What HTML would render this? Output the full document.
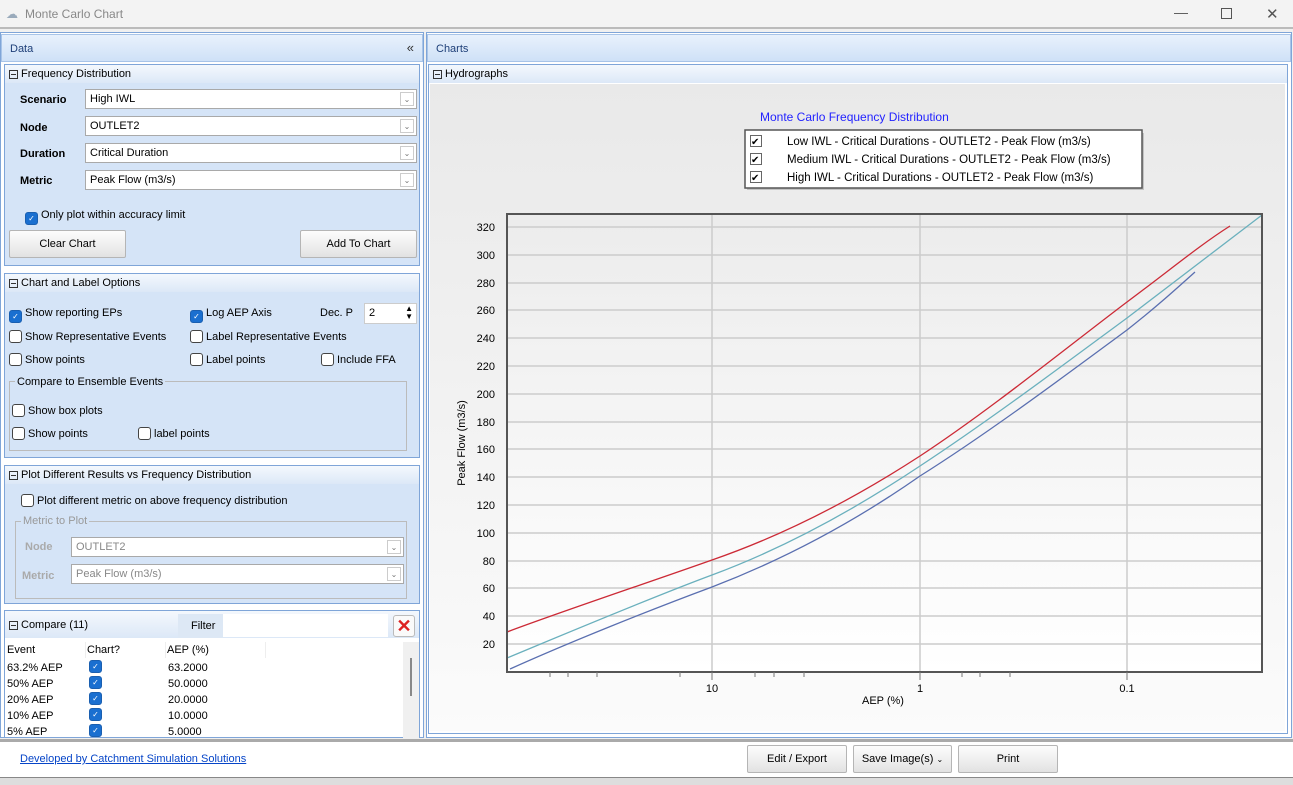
<!DOCTYPE html>
<html><head><meta charset="utf-8"><style>
*{box-sizing:border-box;margin:0;padding:0}
body{width:1293px;height:785px;overflow:hidden;background:#f0f0f0;font-family:"Liberation Sans",sans-serif;font-size:11px;color:#000;position:relative}
.a{position:absolute}
.hdr{background:linear-gradient(#e8f1fc,#cfe1f7);border:1px solid #a8c4e8;color:#1e3f78;font-size:11px;padding:8px 8px}
.grp{border:1px solid #7fa5d8;background:#d5e4f7}
.gh{position:absolute;left:0;right:0;top:0;height:18px;background:linear-gradient(#f4f8fd,#dce8f7);padding:3px 4px;font-size:11px;display:flex;align-items:center}
.box{display:inline-block;width:9px;height:9px;border:1px solid #333;margin-right:3px;position:relative;flex:none}
.box:after{content:"";position:absolute;left:1px;right:1px;top:3px;height:1px;background:#333}
.lbl{font-weight:bold;font-size:11px}
.cb{background:#fff;border:1px solid #a9a9a9;height:20px;padding:3px 4px;font-size:11px}
.cb i{position:absolute;right:2px;top:2px;width:14px;height:14px;border:1px solid #ccc;font-style:normal;color:#777;font-size:8px;text-align:center;line-height:13px}
.chk{display:inline-block;width:13px;height:13px;border:1px solid #444;border-radius:3px;background:#fff;vertical-align:-3px;margin-right:3px}
.chk.on{background:#1a6fd0;border-color:#1a5fb0;color:#fff;font-size:8px;text-align:center;line-height:12px}
.btn{background:linear-gradient(#fdfdfd,#e2e2e2);border:1px solid #b5b5b5;border-radius:2px;text-align:center;font-size:11px}
</style></head><body>
<div class="a" style="left:0;top:0;width:1293px;height:29px;background:#f3f3f3;border-bottom:2px solid #bbb"></div>
<div class="a" style="left:6px;top:7px;color:#9ab;font-size:12px">☁</div>
<div class="a" style="left:25px;top:7px;color:#888;font-size:12px">Monte Carlo Chart</div>
<div class="a" style="left:1174px;top:4px;color:#555;font-size:14px">—</div>
<div class="a" style="left:1221px;top:8px;width:11px;height:11px;border:1px solid #555"></div>
<div class="a" style="left:1266px;top:5px;color:#555;font-size:15px">✕</div>

<div class="a" style="left:0;top:32px;width:424px;height:706px;background:#fff;border:1px solid #7fa5d8"></div>
<div class="a hdr" style="left:1px;top:34px;width:422px;height:28px">Data<span style="position:absolute;right:8px;top:5px;font-size:13px;color:#333">«</span></div>

<div class="a grp" style="left:4px;top:64px;width:416px;height:202px">
 <div class="gh"><span class="box"></span>Frequency Distribution</div>
 <div class="a lbl" style="left:15px;top:29px">Scenario</div>
 <div class="a lbl" style="left:15px;top:57px">Node</div>
 <div class="a lbl" style="left:15px;top:83px">Duration</div>
 <div class="a lbl" style="left:15px;top:110px">Metric</div>
 <div class="a cb" style="left:80px;top:24px;width:332px">High IWL<i>⌄</i></div>
 <div class="a cb" style="left:80px;top:51px;width:332px">OUTLET2<i>⌄</i></div>
 <div class="a cb" style="left:80px;top:78px;width:332px">Critical Duration<i>⌄</i></div>
 <div class="a cb" style="left:80px;top:105px;width:332px">Peak Flow (m3/s)<i>⌄</i></div>
 <div class="a" style="left:20px;top:144px"><span class="chk on">✓</span>Only plot within accuracy limit</div>
 <div class="a btn" style="left:4px;top:165px;width:117px;height:28px;line-height:26px">Clear Chart</div>
 <div class="a btn" style="left:295px;top:165px;width:117px;height:28px;line-height:26px">Add To Chart</div>
</div>

<div class="a grp" style="left:4px;top:273px;width:416px;height:185px">
 <div class="gh"><span class="box"></span>Chart and Label Options</div>
 <div class="a" style="left:4px;top:33px"><span class="chk on">✓</span>Show reporting EPs</div>
 <div class="a" style="left:185px;top:33px"><span class="chk on">✓</span>Log AEP Axis</div>
 <div class="a" style="left:315px;top:33px">Dec. P</div>
 <div class="a" style="left:359px;top:29px;width:53px;height:21px;background:#fff;border:1px solid #ccc;padding:3px 4px">2<span style="position:absolute;right:3px;top:1px;font-size:8px;line-height:8px">▲<br>▼</span></div>
 <div class="a" style="left:4px;top:56px"><span class="chk"></span>Show Representative Events</div>
 <div class="a" style="left:185px;top:56px"><span class="chk"></span>Label Representative Events</div>
 <div class="a" style="left:4px;top:79px"><span class="chk"></span>Show points</div>
 <div class="a" style="left:185px;top:79px"><span class="chk"></span>Label points</div>
 <div class="a" style="left:316px;top:79px"><span class="chk"></span>Include FFA</div>
 <div class="a" style="left:4px;top:107px;width:398px;height:70px;border:1px solid #bbb"></div>
 <div class="a" style="left:10px;top:102px;background:#d5e4f7;padding:0 2px">Compare to Ensemble Events</div>
 <div class="a" style="left:7px;top:130px"><span class="chk"></span>Show box plots</div>
 <div class="a" style="left:7px;top:153px"><span class="chk"></span>Show points</div>
 <div class="a" style="left:133px;top:153px"><span class="chk"></span>label points</div>
</div>

<div class="a grp" style="left:4px;top:465px;width:416px;height:139px">
 <div class="gh"><span class="box"></span>Plot Different Results vs Frequency Distribution</div>
 <div class="a" style="left:16px;top:28px"><span class="chk"></span>Plot different metric on above frequency distribution</div>
 <div class="a" style="left:10px;top:55px;width:392px;height:78px;border:1px solid #bbb"></div>
 <div class="a" style="left:16px;top:49px;background:#d5e4f7;padding:0 2px;color:#999">Metric to Plot</div>
 <div class="a lbl" style="left:20px;top:75px;color:#aaa">Node</div>
 <div class="a lbl" style="left:17px;top:104px;color:#aaa">Metric</div>
 <div class="a cb" style="left:66px;top:71px;width:333px;color:#888">OUTLET2<i>⌄</i></div>
 <div class="a cb" style="left:66px;top:98px;width:333px;color:#888">Peak Flow (m3/s)<i>⌄</i></div>
</div>

<div class="a" style="left:4px;top:610px;width:416px;height:128px;border:1px solid #7fa5d8;background:#fff"></div>
<div class="a" style="left:5px;top:611px;width:414px;height:27px;background:linear-gradient(#f4f8fd,#dce8f7)"></div>
<div class="a" style="left:9px;top:619px;display:flex;align-items:center"><span class="box"></span>Compare (11)</div>
<div class="a" style="left:178px;top:614px;width:46px;height:24px;background:#dde8f5;padding:6px 0 0 13px">Filter</div>
<div class="a" style="left:223px;top:614px;width:165px;height:23px;background:#fff"></div>
<div class="a" style="left:393px;top:615px;width:22px;height:22px;border:1px solid #bbb;border-radius:3px;background:#fafafa;color:#d22;font-size:18px;font-weight:bold;text-align:center;line-height:20px">✕</div>
<div class="a" style="left:7px;top:644px">Event</div>
<div class="a" style="left:87px;top:644px">Chart?</div>
<div class="a" style="left:167px;top:644px">AEP (%)</div>
<div class="a" style="left:85px;top:642px;width:1px;height:16px;background:#eee"></div>
<div class="a" style="left:165px;top:642px;width:1px;height:16px;background:#eee"></div>
<div class="a" style="left:265px;top:642px;width:1px;height:16px;background:#eee"></div>
<div class="a" style="left:403px;top:642px;width:16px;height:96px;background:#f0f0f0"></div>
<div class="a" style="left:410px;top:658px;width:2px;height:38px;background:#888"></div>
<div class="a" style="left:7px;top:660px;line-height:16px">63.2% AEP<br>50% AEP<br>20% AEP<br>10% AEP<br>5% AEP</div>
<div class="a chk on" style="left:89px;top:660px">✓</div>
<div class="a chk on" style="left:89px;top:676px">✓</div>
<div class="a chk on" style="left:89px;top:692px">✓</div>
<div class="a chk on" style="left:89px;top:708px">✓</div>
<div class="a chk on" style="left:89px;top:724px">✓</div>
<div class="a" style="left:168px;top:660px;line-height:16px">63.2000<br>50.0000<br>20.0000<br>10.0000<br>5.0000</div>

<div class="a" style="left:426px;top:32px;width:866px;height:706px;background:#fff;border:1px solid #7fa5d8"></div>
<div class="a hdr" style="left:427px;top:34px;width:864px;height:28px">Charts</div>
<div class="a" style="left:428px;top:64px;width:860px;height:670px;border:1px solid #7fa5d8;background:#fff"></div>
<div class="a" style="left:429px;top:65px;width:858px;height:18px;background:linear-gradient(#f4f8fd,#dce8f7);padding:3px 4px;display:flex;align-items:center"><span class="box"></span>Hydrographs</div>
<div class="a" style="left:430px;top:84px;width:855px;height:647px;background:linear-gradient(#e9e9e9,#fbfbfb)"></div>

<svg class="a" style="left:0;top:0" width="1293" height="785" font-family="Liberation Sans, sans-serif" font-size="11">
 <defs><linearGradient id="pg" x1="0" y1="0" x2="0" y2="1"><stop offset="0" stop-color="#ececec"/><stop offset="1" stop-color="#fff"/></linearGradient></defs>
 <text x="760" y="121" fill="#2323ff" font-size="12">Monte Carlo Frequency Distribution</text>
 <rect x="747" y="133" width="397" height="57" fill="#999" opacity=".5"/>
 <rect x="745" y="130" width="397" height="58" fill="#fff" stroke="#555" stroke-width="1.5"/>
 <g fill="#000"><rect x="750.5" y="135.5" width="11" height="11" fill="#fff" stroke="#666"/><text x="751" y="145" font-size="10">✔</text>
 <rect x="750.5" y="153.5" width="11" height="11" fill="#fff" stroke="#666"/><text x="751" y="163" font-size="10">✔</text>
 <rect x="750.5" y="171.5" width="11" height="11" fill="#fff" stroke="#666"/><text x="751" y="181" font-size="10">✔</text>
 <text x="787" y="145" font-size="11.5">Low IWL - Critical Durations - OUTLET2 - Peak Flow (m3/s)</text>
 <text x="787" y="163" font-size="11.5">Medium IWL - Critical Durations - OUTLET2 - Peak Flow (m3/s)</text>
 <text x="787" y="181" font-size="11.5">High IWL - Critical Durations - OUTLET2 - Peak Flow (m3/s)</text></g>
 <rect x="507" y="214" width="755" height="458" fill="url(#pg)"/>
 <g stroke="#ccc" stroke-width="1.5">
  <line x1="507" x2="1262" y1="227" y2="227"/><line x1="507" x2="1262" y1="255" y2="255"/><line x1="507" x2="1262" y1="283" y2="283"/><line x1="507" x2="1262" y1="310" y2="310"/><line x1="507" x2="1262" y1="338" y2="338"/><line x1="507" x2="1262" y1="366" y2="366"/><line x1="507" x2="1262" y1="394" y2="394"/><line x1="507" x2="1262" y1="422" y2="422"/><line x1="507" x2="1262" y1="449" y2="449"/><line x1="507" x2="1262" y1="477" y2="477"/><line x1="507" x2="1262" y1="505" y2="505"/><line x1="507" x2="1262" y1="533" y2="533"/><line x1="507" x2="1262" y1="561" y2="561"/><line x1="507" x2="1262" y1="588" y2="588"/><line x1="507" x2="1262" y1="616" y2="616"/><line x1="507" x2="1262" y1="644" y2="644"/>
  <line x1="712" x2="712" y1="214" y2="672"/><line x1="920" x2="920" y1="214" y2="672"/><line x1="1127" x2="1127" y1="214" y2="672"/>
 </g>
 <g fill="none" stroke-width="1.3">
  <path stroke="#cc2a36" d="M507,632 C560,612 650,582 712,560 C790,533 860,495 920,456 C990,410 1070,345 1127,302 C1170,270 1200,245 1230,226"/>
  <path stroke="#6ab0bd" d="M507,658 C560,636 650,598 712,575 C790,546 860,506 920,466 C990,420 1070,360 1127,318 C1180,278 1225,243 1262,215"/>
  <path stroke="#5a6fb0" d="M510,669 C570,642 650,610 712,587 C790,557 860,518 920,476 C990,432 1070,372 1127,330 C1155,308 1175,290 1195,272"/>
 </g>
 <path d="M507,214 V672 H1262 V214 Z" fill="none" stroke="#555" stroke-width="2"/>
 <g text-anchor="end" fill="#000">
  <text x="495" y="231">320</text><text x="495" y="259">300</text><text x="495" y="287">280</text><text x="495" y="314">260</text><text x="495" y="342">240</text><text x="495" y="370">220</text><text x="495" y="398">200</text><text x="495" y="426">180</text><text x="495" y="453">160</text><text x="495" y="481">140</text><text x="495" y="509">120</text><text x="495" y="537">100</text><text x="495" y="565">80</text><text x="495" y="592">60</text><text x="495" y="620">40</text><text x="495" y="648">20</text>
 </g>
 <g text-anchor="middle"><text x="712" y="692">10</text><text x="920" y="692">1</text><text x="1127" y="692">0.1</text><text x="883" y="704">AEP (%)</text></g>
 <g stroke="#777" stroke-width="1">
  <line x1="550" x2="550" y1="672" y2="677"/><line x1="568" x2="568" y1="672" y2="677"/><line x1="597" x2="597" y1="672" y2="677"/><line x1="680" x2="680" y1="672" y2="677"/><line x1="712" x2="712" y1="672" y2="680"/><line x1="755" x2="755" y1="672" y2="677"/><line x1="774" x2="774" y1="672" y2="677"/><line x1="804" x2="804" y1="672" y2="677"/><line x1="920" x2="920" y1="672" y2="680"/><line x1="962" x2="962" y1="672" y2="677"/><line x1="980" x2="980" y1="672" y2="677"/><line x1="1010" x2="1010" y1="672" y2="677"/><line x1="1127" x2="1127" y1="672" y2="680"/>
 </g>
 <text transform="translate(465,443) rotate(-90)" text-anchor="middle">Peak Flow  (m3/s)</text>
</svg>

<div class="a" style="left:0;top:739px;width:1293px;height:3px;background:#aaa"></div>
<div class="a" style="left:0;top:742px;width:1293px;height:35px;background:#fff"></div>
<div class="a" style="left:20px;top:753px;color:#0645c8;text-decoration:underline">Developed by Catchment Simulation Solutions</div>
<div class="a btn" style="left:747px;top:745px;width:100px;height:28px;line-height:26px">Edit / Export</div>
<div class="a btn" style="left:853px;top:745px;width:99px;height:28px;line-height:26px">Save Image(s) <span style="font-size:8px">⌄</span></div>
<div class="a btn" style="left:958px;top:745px;width:100px;height:28px;line-height:26px">Print</div>
<div class="a" style="left:0;top:777px;width:1293px;height:8px;background:#ddd;border-top:1px solid #888"></div>
</body></html>
